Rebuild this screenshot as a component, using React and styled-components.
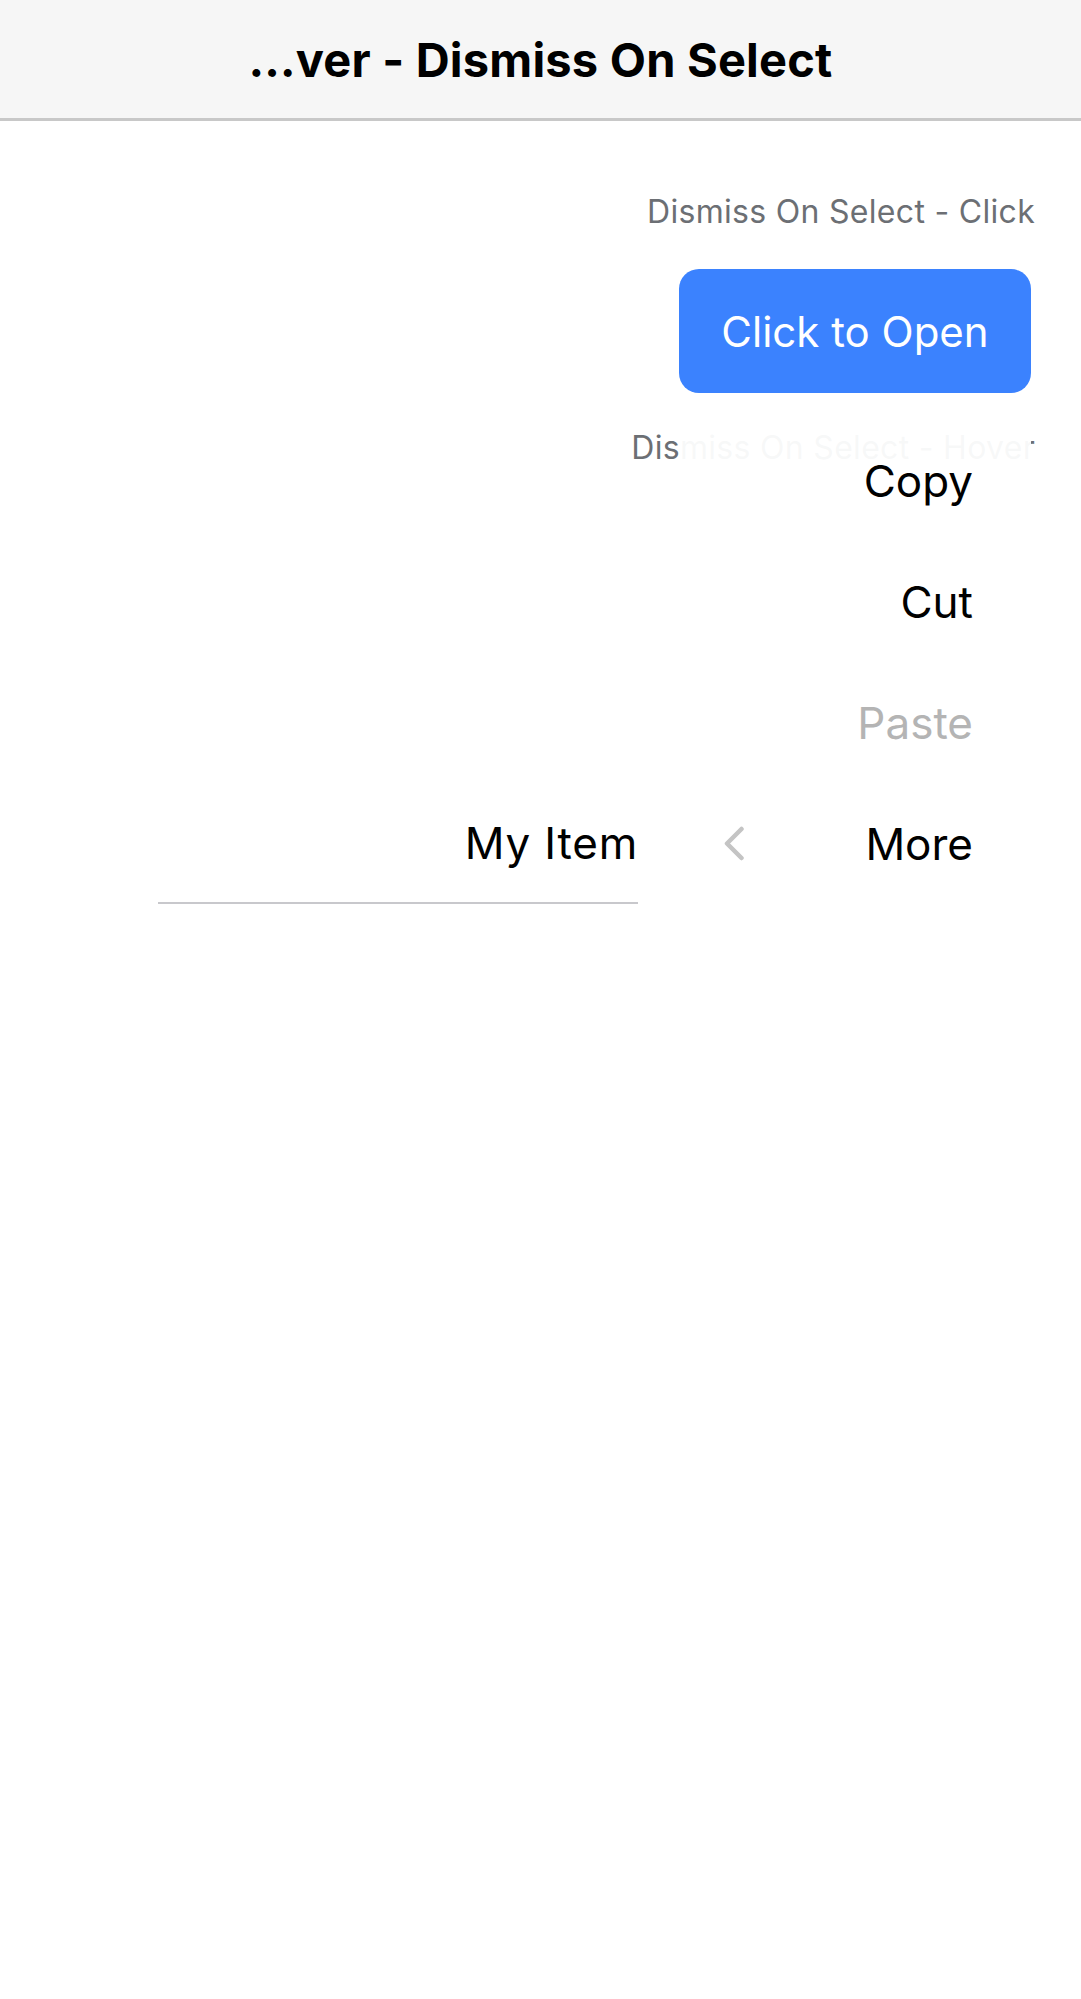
import React from 'react'
import styled, { createGlobalStyle } from 'styled-components'

const GlobalStyle = createGlobalStyle`
  html, body {
    margin: 0;
    padding: 0;
    background: #ffffff;
  }
  body {
    font-family: Inter, "Noto Sans", "Liberation Sans", sans-serif;
    -webkit-font-smoothing: antialiased;
  }
`

const Page = styled.div`
  width: 1081px;
  min-height: 1999px;
  background: #fff;
  display: flex;
  flex-direction: column;
`

const NavBar = styled.header`
  height: 118px;
  background: #f6f6f6;
  border-bottom: 3px solid #c8c8c8;
  display: flex;
  align-items: center;
  justify-content: center;
`

const Title = styled.h1`
  margin: 0;
  font-size: 47px;
  font-weight: 700;
  color: #000;
  letter-spacing: 0.2px;
`

const Content = styled.main`
  display: flex;
  flex-direction: column;
  align-items: flex-end;
  padding: 72px 46px 0 0;
  gap: 36px;
`

const Section = styled.section`
  display: flex;
  flex-direction: column;
  align-items: flex-end;
  gap: 38px;
`

const Label = styled.div`
  font-size: 32px;
  line-height: 38px;
  color: #6c6f74;
  letter-spacing: 0.3px;
`

const Anchor = styled.div`
  position: relative;
  margin-right: 4px;
`

const OpenButton = styled.button`
  width: 352px;
  height: 124px;
  border: none;
  border-radius: 20px;
  background: #3b82fe;
  color: #fff;
  font-family: inherit;
  font-size: 42px;
  opacity: ${(p) => (p.$faded ? 0.08 : 1)};
  cursor: pointer;
`

const Menu = styled.ul`
  position: absolute;
  top: calc(100% + 27px);
  right: 0;
  width: 352px;
  margin: 0;
  padding: 0;
  list-style: none;
  background: rgba(255, 255, 255, 0.95);
  z-index: 10;
`

const MenuItem = styled.li`
  position: relative;
  height: 121px;
  display: flex;
  align-items: center;
  justify-content: flex-end;
  padding: 0 58px 0 44px;
  font-size: 44px;
  color: ${(p) => (p.$disabled ? '#b4b4b4' : '#000')};
`

const Chevron = styled.svg`
  margin-right: auto;
  width: 22px;
  height: 35px;
`

const SubMenu = styled.div`
  position: absolute;
  top: 0;
  right: calc(100% + 41px);
  width: 480px;
  height: 119px;
  display: flex;
  align-items: center;
  justify-content: flex-end;
  border-bottom: 2px solid #c8c8cc;
  font-size: 44px;
  letter-spacing: 0.8px;
  color: #000;
  background: #fff;
`

function ChevronLeft() {
  return (
    <Chevron viewBox="0 0 22 35" fill="none">
      <polyline
        points="18.5,3 4,17.5 18.5,32"
        stroke="#c4c4c4"
        strokeWidth="4.5"
        strokeLinecap="round"
        strokeLinejoin="round"
      />
    </Chevron>
  )
}

export default function App() {
  return (
    <Page>
      <GlobalStyle />
      <NavBar>
        <Title>…ver - Dismiss On Select</Title>
      </NavBar>
      <Content>
        <Section>
          <Label>Dismiss On Select - Click</Label>
          <Anchor>
            <OpenButton>Click to Open</OpenButton>
            <Menu>
              <MenuItem>Copy</MenuItem>
              <MenuItem>Cut</MenuItem>
              <MenuItem $disabled>Paste</MenuItem>
              <MenuItem>
                <ChevronLeft />
                More
                <SubMenu>My Item</SubMenu>
              </MenuItem>
            </Menu>
          </Anchor>
        </Section>
        <Section>
          <Label>Dismiss On Select - Hover</Label>
          <Anchor>
            <OpenButton $faded>Click to Open</OpenButton>
          </Anchor>
        </Section>
      </Content>
    </Page>
  )
}
